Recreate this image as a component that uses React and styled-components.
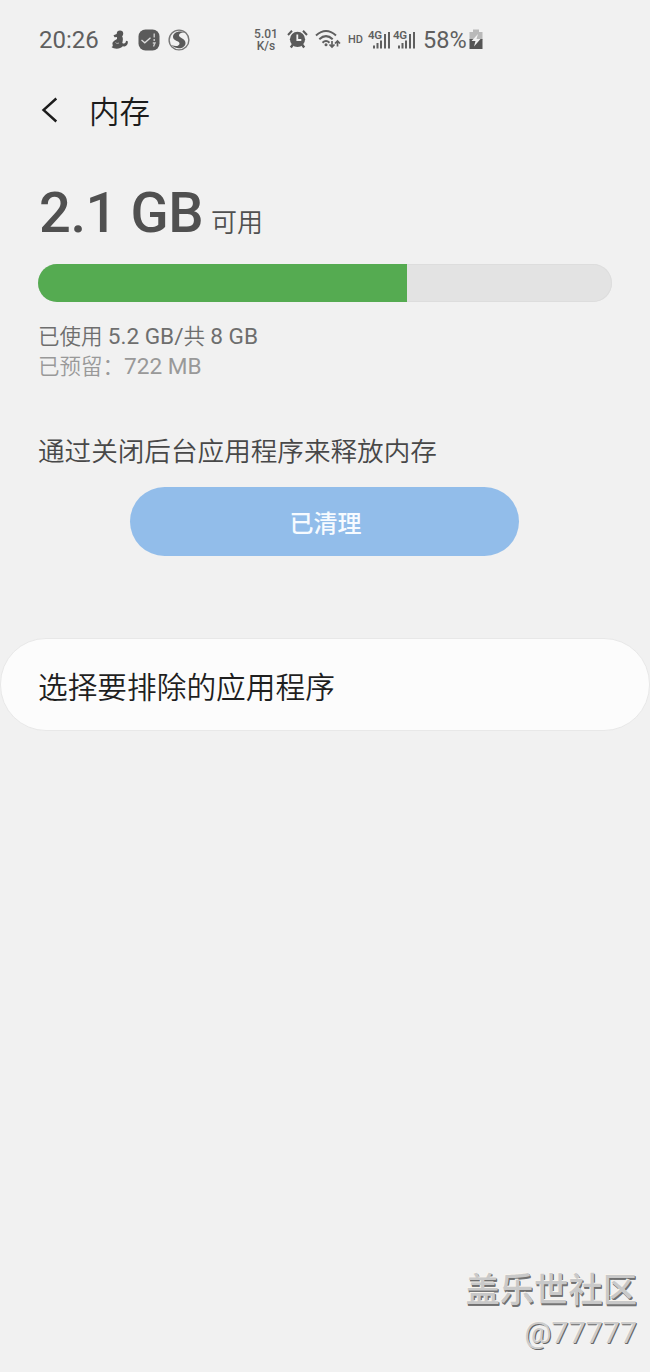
import React from 'react'
import styled, { createGlobalStyle } from 'styled-components'

const GlobalStyle = createGlobalStyle`
  body {
    margin: 0;
    background: #f1f1f1;
  }
  * {
    box-sizing: border-box;
  }
`;

const Page = styled.div`
  display: flex;
  flex-direction: column;
  width: 650px;
  height: 1372px;
  background: #f1f1f1;
  font-family: Roboto, "Noto Sans CJK SC", sans-serif;
  white-space: nowrap;
  overflow: hidden;
`;

const StatusBar = styled.div`
  display: flex;
  align-items: center;
  height: 80px;
  padding-left: 39px;
  color: #5f5f5f;
`;

const StatusText = styled.span`
  width: ${props => props.$width}px;
  font-size: ${props => props.$size || 24}px;
  font-weight: ${props => props.$weight || 400};
  line-height: 28px;
`;

const Speed = styled.div`
  width: 24px;
  margin: 0 9px 0 64px;
  font-size: 12px;
  font-weight: 500;
  line-height: 12px;
  text-align: center;
`;

const Icon = styled.svg`
  flex: none;
  margin-right: ${props => props.$gap || 0}px;
  overflow: visible;
`;

const Battery = styled.div`
  display: flex;
  align-items: center;
  margin-left: 5px;
`;

const Header = styled.div`
  display: flex;
  align-items: center;
  height: 60px;
  padding-left: 40px;
  color: #1c1c1c;
`;

const Title = styled.h1`
  margin: 0 0 0 28px;
  padding-top: 5px;
  font-size: 30.5px;
  font-weight: 350;
  line-height: 60px;
`;

const Summary = styled.section`
  padding: 40px 38px 0;
`;

const Amount = styled.div`
  display: flex;
  align-items: baseline;
  height: 84px;
  padding-left: 1px;
  color: #505050;
  line-height: 66px;
`;

const Big = styled.span`
  width: 172px;
  font-size: 56px;
  font-weight: 500;
  letter-spacing: -0.4px;
`;

const Unit = styled.span`
  font-size: 26px;
  font-weight: 350;
`;

const Track = styled.div`
  height: 38px;
  border-radius: 19px;
  background: #e3e3e3;
  box-shadow: inset 0 0 0 1px #dddddd;
  overflow: hidden;
`;

const Fill = styled.div`
  height: 38px;
  background: #55ab51;
`;

const Details = styled.div`
  padding-top: 19px;
`;

const Detail = styled.div`
  height: 30px;
  font-size: 21.5px;
  font-weight: 350;
  line-height: 31px;
  color: ${props => props.$light ? '#999999' : '#6e6e6e'};
`;

const Num = styled.span`
  font-size: 22.6px;
  font-weight: 400;
`;

const Hint = styled.p`
  margin: 52px 0 0;
  height: 54px;
  font-size: 26.6px;
  font-weight: 350;
  line-height: 38px;
  color: #484848;
`;

const CleanButton = styled.button`
  display: block;
  width: 389px;
  height: 69px;
  margin: 0 0 0 92px;
  padding: 5px 0 0 2px;
  border: 0;
  border-radius: 35px;
  background: #92bdea;
  color: #f7fbff;
  font-family: inherit;
  font-size: 24px;
  font-weight: 500;
  line-height: 64px;
`;

const ExcludeRow = styled.div`
  height: 93px;
  margin-top: 82px;
  padding: 3px 0 0 37px;
  border: 1px solid #e8e8e8;
  border-radius: 46px;
  background: #fcfcfc;
  color: #1f1f1f;
  font-size: 29.7px;
  font-weight: 350;
  line-height: 91px;
`;

const Watermark = styled.div`
  margin-top: auto;
  padding: 0 13px 19px 0;
  text-align: right;
`;

const Community = styled.div`
  height: 49px;
  font-family: "Noto Sans CJK SC", sans-serif;
  font-size: 34.3px;
  font-weight: 500;
  line-height: 46px;
  color: #c9c9c9;
  text-shadow: -1px -1px 0 #f8f4ee, 1px 1px 0 #707070, 1px 2px 0 #777777;
`;

const UserName = styled.div`
  font-size: 30.4px;
  line-height: 40px;
  color: #cccccc;
  text-shadow: -1px -1px 0 #f8f4ee, 1px 1px 0 #666666;
`;

function SignalIcon() {
  return (
    <Icon width="25" height="24" viewBox="0 0 25 24" fill="#5f5f5f">
      <text x="0" y="11" fontSize="11.5" fontWeight="600" letterSpacing="-0.3">4G</text>
      <path d="M5 17.500h2v3h-2zM8.500 15h2v5.500h-2zM12 12.500h2v8h-2zM16 6h2v14.500h-2zM20 4h2v16.500h-2z" />
    </Icon>
  )
}

export default function App() {
  const used = 369;

  return (
    <Page>
      <GlobalStyle />
      <StatusBar>
        <StatusText $width={71}>20:26</StatusText>
        <Icon $gap={9} width="19" height="22" viewBox="0 0 19 22" fill="#555">
          <circle cx="10" cy="4.600" r="3.200" />
          <path d="M8 4.500L3.500 6.300 4.500 8.200 8 8z" />
          <path d="M7 7L12 7C13.500 9.500 12.800 11.500 12.300 14C14.300 15.500 16 14 16 11.800L17.800 12.200C18.300 16.500 15 17.800 12.800 17.300C10.500 20.300 4 20.500 1.500 18C3.300 17.500 2.800 16.800 2.500 15C2 12.500 5 11.500 7 10z" />
          <path d="M5.500 13.500q1 1.800 3.500 0.500" fill="none" stroke="#aaa" strokeWidth="1" />
        </Icon>
        <Icon $gap={8} width="22" height="22" viewBox="0 0 22 22">
          <rect x="0.500" y="0.500" width="21" height="21" rx="7" fill="#5a5a5a" />
          <path d="M3.500 11l3.300 2.800 5.700-5" fill="none" stroke="#ddd" strokeWidth="1.300" />
          <path d="M16.200 4.500v4M16.200 10v2M14.800 14h2.200l-1.500 3.500" fill="none" stroke="#ccc" strokeWidth="1.400" />
        </Icon>
        <Icon width="22" height="22" viewBox="0 0 22 22">
          <circle cx="11" cy="11" r="9.900" fill="none" stroke="#777" strokeWidth="1.400" />
          <path d="M17 3.500C11 1 5 3.500 5 8C5 12 11.500 11.700 11.500 14.500C11.500 17 8 18 3.500 16C9 21.500 17.500 19.500 17.500 14C17.500 9.500 11 9 11 6.500C11 4 14 3.500 17 3.500z" fill="#5a5a5a" />
        </Icon>
        <Speed>5.01<br />K/s</Speed>
        <Icon $gap={7} width="21" height="22" viewBox="0 0 21 22">
          <path d="M1 6L5 1.800M20 6L16 1.800" stroke="#5a5a5a" strokeWidth="2" fill="none" />
          <circle cx="10.500" cy="10.300" r="7.600" fill="#5a5a5a" />
          <path d="M6 15.500l-2.200 3M15 15.500l2.200 3" stroke="#5a5a5a" strokeWidth="2.400" />
          <path d="M10.300 5.500v5.500h4" stroke="#f1f1f1" strokeWidth="1.800" fill="none" />
        </Icon>
        <Icon $gap={7} width="26" height="22" viewBox="0 0 26 22" fill="none" stroke="#5f5f5f" strokeWidth="2">
          <path d="M1 6.500Q11 -2.500 21 6.500M4.300 10.300Q11 4 17.700 10.300M7.500 13.800Q11 10.300 14.500 13.800" />
          <circle cx="11" cy="15.800" r="1.500" fill="#5f5f5f" stroke="none" />
          <path d="M17 12v6M14.500 15.500l2.500 2.600 2.500-2.600M22.500 17.500v-5.500M20 14.500l2.500-2.600 2.500 2.600" strokeWidth="1.700" />
        </Icon>
        <StatusText $width={20} $size={11} $weight={500}>HD</StatusText>
        <SignalIcon />
        <SignalIcon />
        <Battery>
          <StatusText $width={46} $size={23.5}>58%</StatusText>
          <Icon width="14" height="22" viewBox="0 0 14 22">
            <path d="M4 0.500h6v2.500h3.500v8H0.500v-8H4z" fill="#b9b9b9" />
            <path d="M0.500 10h13v10h-13z" fill="#555" />
            <path d="M9 5L2.500 12h4L5 17.500l6.500-7.500H7.500z" fill="#f1f1f1" />
          </Icon>
        </Battery>
      </StatusBar>

      <Header>
        <svg width="21" height="28" viewBox="0 0 21 28">
          <path d="M16.300 2.500L3.500 14L16.300 25.500" fill="none" stroke="#1c1c1c" strokeWidth="2.400" />
        </svg>
        <Title>内存</Title>
      </Header>

      <Summary>
        <Amount>
          <Big>2.1 GB</Big>
          <Unit>可用</Unit>
        </Amount>
        <Track>
          <Fill style={{width: used + 'px'}} />
        </Track>
        <Details>
          <Detail>已使用 <Num>5.2 GB/</Num>共 <Num>8 GB</Num></Detail>
          <Detail $light>已预留：<Num>722 MB</Num></Detail>
        </Details>
        <Hint>通过关闭后台应用程序来释放内存</Hint>
        <CleanButton>已清理</CleanButton>
      </Summary>

      <ExcludeRow>选择要排除的应用程序</ExcludeRow>

      <Watermark>
        <Community>盖乐世社区</Community>
        <UserName>@77777</UserName>
      </Watermark>
    </Page>
  )
}
